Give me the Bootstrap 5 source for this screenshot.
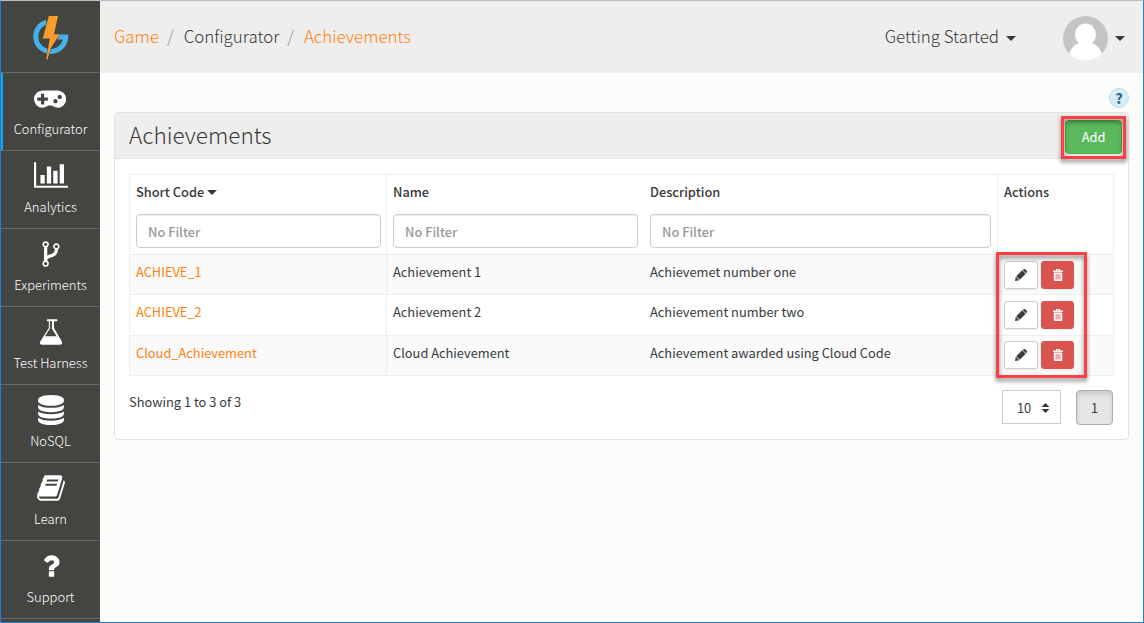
<!DOCTYPE html>
<html lang="en">
<head>
<meta charset="utf-8">
<title>Achievements</title>
<link href="https://cdn.jsdelivr.net/npm/bootstrap@5.3.0/dist/css/bootstrap.min.css" rel="stylesheet">
<script src="https://cdn.jsdelivr.net/npm/bootstrap@5.3.0/dist/js/bootstrap.bundle.min.js"></script>
<style>
  body { font: 400 12.83px/20px "Noto Sans CJK SC", sans-serif; color: #373a3c; background: #fcfcfa; }
  a { color: #ff7f0e; text-decoration: none; }
  .window { height: 623px; border: 1px solid #1883d7; border-top-color: #bfbdbd; }
  .sidebar { width: 99px; background: #444441; }
  .brand { height: 72px; border-bottom: 1px solid #686866; padding-top: 13px; }
  .side-item { height: 78px; padding-top: 10px; border-bottom: 1px solid #686866; color: #fff; font-weight: 300; font-size: 13px; }
  .side-item svg { height: 30px; width: auto; fill: #fff; display: block; margin-left: 1px; }
  .side-item svg.wide { margin: 0 1px 0 0; }
  .side-item span { line-height: 20px; margin-top: 6px; }
  .side-item.current { box-shadow: inset 2px 0 #1ba5e8; }
  .topbar { height: 72px; background: #f0eeed; font-size: 16.9px; font-weight: 300; padding: 0 18px 2px 14px; }
  .crumbs .breadcrumb-item + .breadcrumb-item { padding-left: 8px; }
  .crumbs .breadcrumb-item + .breadcrumb-item::before { padding-right: 10px; color: #8f9296; }
  .started { margin-right: 47px; }
  .arrow { border: 5px solid transparent; border-top-color: #373a3c; border-bottom: 0; }
  .topbar .arrow { margin-left: 7px; }
  .grid .arrow { margin-left: 3px; }
  .help-row { padding: 15px 14px 0 0; }
  .help { width: 20px; height: 20px; border: 1px solid #b5dcef; background: #d9edf7; color: #2b6d92; font-weight: 900; font-size: 14px; }
  .panel { --bs-card-border-color: #e3e2e1; --bs-card-border-radius: 4px; height: 328px; margin: 4px 14px 0; }
  .panel-head { height: 46px; background: #f0eeed; padding: 0 6px 0 14px; border-bottom: 1px solid #e3e2e1; border-radius: 3px 3px 0 0; }
  .panel-head h1 { font-size: 22.5px; font-weight: 300; line-height: 30px; padding-bottom: 4px; }
  .add-wrap { margin-top: 2px; }
  .btn-add { width: 57px; height: 34px; padding: 0; border: 1px solid #4cae4c; background: #5cb85c; color: #fff; font-size: 12.83px; border-radius: 4px; }
  .marker { position: absolute; border: 3px solid #fb4044; filter: drop-shadow(0 3px 2px rgba(0,0,0,.5)); pointer-events: none; z-index: 2; }
  .marker-add { inset: -4px -4px -5px -4px; }
  .marker-actions { left: -8px; top: -9px; width: 91px; height: 126px; }
  .grid { table-layout: fixed; width: 984px; margin: 15px 0 0 14px; border-collapse: collapse; }
  .grid th, .grid td { border: 0 solid #eeeeee; border-width: 1px 0; padding: 0 6px; vertical-align: top; }
  .grid tr > :first-child, .grid tr > :last-child { border-left-width: 1px; }
  .grid tr > :last-child { border-right-width: 1px; }
  .grid tr > :nth-child(2) { border-left-width: 1px; }
  .grid tr > :nth-child(3) { padding-left: 6.5px; }
  .grid tr > :first-child { padding-right: 5px; }
  .grid th { height: 80px; font-weight: 500; font-size: 12.8px; padding-top: 7px; }
  .grid td { height: 40px; padding-top: 7px; }
  .grid tr.tall td { height: 41px; }
  .grid tbody tr:nth-child(odd) td { background: #fafafa; }
  .filter { height: 34px; margin-top: 12px; border: 1px solid #ccc; border-radius: 4px; padding: 0 11px; font: inherit; box-shadow: inset 0 1px 1px rgba(0,0,0,.075); }
  .filter::placeholder { color: #999; opacity: 1; }
  .grid td.acts { padding-top: 6px; }
  .grid tr:last-child td.acts { padding-top: 5px; }
  .acts-row { gap: 3px; }
  .acts .btn { height: 28px; padding: 0; border-radius: 3px; box-shadow: 0 1px 2px rgba(0,0,0,.08); }
  .acts svg { width: 12px; height: 12px; display: block; }
  .btn-edit { width: 34px; background: #fff; border: 1px solid #ccc; color: #373a3c; }
  .btn-del { width: 33px; background: #d9534f; border: 1px solid #d9534f; color: #fff; }
  .foot { padding: 14px 15px 0 14px; }
  .foot .total { margin-top: 2px; }
  .size { width: 59px; height: 34px; border: 1px solid #ccc; padding: 1px 10px 0 14px; background: #fff; }
  .pg { width: 37px; height: 35px; margin-left: 15px; border: 1px solid #adadad; background: #e6e6e6; border-radius: 4px; box-shadow: inset 0 3px 5px rgba(0,0,0,.125); padding-top: 1px; }
</style>
</head>
<body>
<div class="window d-flex overflow-hidden">
  <nav class="sidebar flex-shrink-0 d-flex flex-column">
    <div class="brand flex-shrink-0 d-flex justify-content-center">
      <svg width="40" height="48" viewBox="30.500 14 40 48">
        <path d="M46 22.100A15 15 0 1 0 65.200 36.900H57" fill="none" stroke="#45b1e8" stroke-width="5"/>
        <path d="M48.300 16h9.200l-4 18.300h5.700L50.300 48l-3.500 12-1-1.500 3.500-20h-7z" fill="#f89c2c" stroke="#444441" stroke-width="1" paint-order="stroke"/>
      </svg>
    </div>
    <a class="side-item current flex-shrink-0 d-flex flex-column align-items-center" href="#">
      <svg class="wide" viewBox="0 64 1920 1792"><path d="M832 1088V960q0-14-9-23t-23-9H608V736q0-14-9-23t-23-9H448q-14 0-23 9t-9 23v192H224q-14 0-23 9t-9 23v128q0 14 9 23t23 9h192v192q0 14 9 23t23 9h128q14 0 23-9t9-23v-192h192q14 0 23-9t9-23zm576 64q0-53-37.500-90.500T1280 1024t-90.500 37.500T1152 1152t37.500 90.500T1280 1280t90.500-37.500T1408 1152zm256-256q0-53-37.500-90.500T1536 768t-90.500 37.500T1408 896t37.500 90.500T1536 1024t90.500-37.500T1664 896zm256 128q0 212-150 362t-362 150q-192 0-338-128H850q-146 128-338 128-212 0-362-150T0 1024t150-362 362-150h896q212 0 362 150t150 362z"/></svg>
      <span>Configurator</span></a>
    <a class="side-item flex-shrink-0 d-flex flex-column align-items-center" href="#">
      <svg viewBox="0 60 2048 1792"><path d="M640 896v512H384V896h256zm384-512v1024H768V384h256zm1024 1152v128H0V128h128v1408h1920zm-640-896v768h-256V640h256zm384-384v1152h-256V256h256z"/></svg>
      <span>Analytics</span></a>
    <a class="side-item flex-shrink-0 d-flex flex-column align-items-center" href="#">
      <svg viewBox="0 0 1792 1792"><path d="M672 1472q0-40-28-68t-68-28-68 28-28 68 28 68 68 28 68-28 28-68zm0-1152q0-40-28-68t-68-28-68 28-28 68 28 68 68 28 68-28 28-68zm640 128q0-40-28-68t-68-28-68 28-28 68 28 68 68 28 68-28 28-68zm96 0q0 52-26 96.500t-70 69.500q-2 287-226 414-67 38-203 81-128 40-169.500 71t-41.500 100v26q44 25 70 69.500t26 96.500q0 80-56 136t-136 56-136-56-56-136q0-52 26-96.500t70-69.500V486q-44-25-70-69.500T384 320q0-80 56-136t136-56 136 56 56 136q0 52-26 96.500T672 486v497q54-26 154-57 55-17 87.500-29.500t70.500-31 59-39.500 40.500-51 28-69.500T1120 614q-44-25-70-69.500t-26-96.500q0-80 56-136t136-56 136 56 56 136z"/></svg>
      <span>Experiments</span></a>
    <a class="side-item flex-shrink-0 d-flex flex-column align-items-center" href="#">
      <svg viewBox="0 0 1792 1792"><path fill-rule="evenodd" d="M1527 1447q56 89 21.500 153t-140.500 64H384q-106 0-140.500-64t21.500-153l503-793V256h-64q-26 0-45-19t-19-45 19-45 45-19h512q26 0 45 19t19 45-19 45-45 19h-141v398zM832 256v435l-20 31-272 430h712L980 722l-20-31V256z"/><path d="M950 256h74v398l503 793-70 30L950 700z"/></svg>
      <span>Test Harness</span></a>
    <a class="side-item flex-shrink-0 d-flex flex-column align-items-center" href="#">
      <svg viewBox="0 0 1792 1792"><path d="M896 768q237 0 443-43t325-127v170q0 69-103 128t-280 93.500-385 34.500-385-34.500T231 896 128 768V598q119 84 325 127t443 43zm0 768q237 0 443-43t325-127v170q0 69-103 128t-280 93.500-385 34.500-385-34.500-280-93.500-103-128v-170q119 84 325 127t443 43zm0-384q237 0 443-43t325-127v170q0 69-103 128t-280 93.500-385 34.500-385-34.500-280-93.500-103-128V982q119 84 325 127t443 43zM896 0q208 0 385 34.500t280 93.500 103 128v128q0 69-103 128t-280 93.500T896 640t-385-34.500T231 512 128 384V256q0-69 103-128t280-93.500T896 0z"/></svg>
      <span>NoSQL</span></a>
    <a class="side-item flex-shrink-0 d-flex flex-column align-items-center" href="#">
      <svg viewBox="0 0 1792 1792"><path d="M1703 478q40 57 18 129l-275 906q-19 64-76.500 107.500T1247 1664H324q-77 0-148.500-53.500T76 1479q-24-67-2-127 0-4 3-27t4-37q1-8-3-21.500t-3-19.500q2-11 8-21t16.500-23.500T116 1179q23-38 45-91.500t30-91.500q3-10 .5-30t-.5-28q3-11 17-28t17-23q21-36 42-92t25-90q1-9-2.500-32t.5-28q4-13 22-30.500t22-22.500q19-26 42.500-84.500T404 411q1-8-3-25.500t-2-26.500q2-8 9-18t18-23 17-21q8-12 16.500-30.500t15-35 16-36 19.500-32 26.500-23.500 36-11.500T620 134l-1 3q38-9 51-9h761q74 0 114 56t18 130l-274 906q-36 119-71.500 153.500T1089 1408H220q-27 0-38 15-11 16-1 43 24 70 144 70h923q29 0 56-15.500t35-41.500l300-987q7-22 5-57 38 15 59 43zm-1064 2q-4 13 2 22.500t20 9.500h608q13 0 25.500-9.500T1311 480l21-64q4-13-2-22.500t-20-9.500H702q-13 0-25.500 9.500T660 416zm-83 256q-4 13 2 22.500t20 9.500h608q13 0 25.500-9.500T1228 736l21-64q4-13-2-22.500t-20-9.500H619q-13 0-25.500 9.500T577 672z"/></svg>
      <span>Learn</span></a>
    <a class="side-item flex-shrink-0 d-flex flex-column align-items-center" href="#">
      <svg viewBox="0 0 1792 1792"><path d="M1088 1256v240q0 16-12 28t-28 12H808q-16 0-28-12t-12-28v-240q0-16 12-28t28-12h240q16 0 28 12t12 28zm316-600q0 54-15.500 101t-35 76.500-55 59.500-57.500 43.500-61 35.500q-41 23-68.500 65t-27.500 67q0 17-12 32.500t-28 15.500H804q-15 0-25.500-18.500T768 1096v-45q0-83 65-156.500T976 786q59-27 84-56t25-76q0-42-46.500-74T931 548q-65 0-108 29-35 25-107 115-13 16-31 16-12 0-25-8L496 575q-13-10-15.500-25t5.500-28q160-266 464-266 80 0 161 31t146 83 106 127.500 41 158.500z"/></svg>
      <span>Support</span></a>
  </nav>

  <main class="flex-grow-1">
    <header class="topbar d-flex align-items-center">
      <ol class="breadcrumb crumbs mb-0 me-auto">
        <li class="breadcrumb-item"><a href="#">Game</a></li>
        <li class="breadcrumb-item">Configurator</li>
        <li class="breadcrumb-item"><a href="#">Achievements</a></li>
      </ol>
      <div class="started d-flex align-items-center"><span>Getting Started</span><i class="arrow mt-1"></i></div>
      <svg width="45" height="45" viewBox="0 0 45 45" class="mt-1">
        <clipPath id="face"><circle cx="22.500" cy="22.500" r="22.500"/></clipPath>
        <g clip-path="url(#face)"><path fill="#c4c4c4" d="M0 0h45v45H0z"/><g fill="#fff"><ellipse cx="22.500" cy="18.500" rx="10.500" ry="11"/><path d="M5 45c0-11 6-17 13-18.500h9c7 1.500 13 7.500 13 18.500z"/></g></g>
      </svg>
      <i class="arrow mt-1"></i>
    </header>

    <div class="help-row d-flex justify-content-end"><span class="help rounded-circle d-flex align-items-center justify-content-center">?</span></div>

    <section class="card panel">
      <div class="panel-head d-flex align-items-center justify-content-between">
        <h1 class="mb-0">Achievements</h1>
        <div class="add-wrap position-relative"><button class="btn btn-add d-block">Add</button><span class="marker marker-add"></span></div>
      </div>
      <table class="grid">
        <colgroup><col style="width:257px"><col style="width:257px"><col style="width:354px"><col style="width:116px"></colgroup>
        <thead>
          <tr>
            <th><div class="d-flex align-items-center">Short Code<i class="arrow"></i></div><input class="filter d-block w-100" placeholder="No Filter"></th>
            <th>Name<input class="filter d-block w-100" placeholder="No Filter"></th>
            <th>Description<input class="filter d-block w-100" placeholder="No Filter"></th>
            <th>Actions</th>
          </tr>
        </thead>
        <tbody id="rows"></tbody>
      </table>
      <div class="foot d-flex align-items-start">
        <div class="total me-auto">Showing 1 to 3 of 3</div>
        <div class="size d-flex align-items-center justify-content-between">10
          <svg width="9" height="10" viewBox="0 0 9 10"><path d="M4.500 0L8.500 4h-8zM4.500 10L.5 6h8z" fill="#373a3c"/></svg></div>
        <div class="pg d-flex align-items-center justify-content-center">1</div>
      </div>
    </section>
  </main>
</div>
<script>
  const rows = [
    ['ACHIEVE_1', 'Achievement 1', 'Achievemet number one'],
    ['ACHIEVE_2', 'Achievement 2', 'Achievement number two'],
    ['Cloud_Achievement', 'Cloud Achievement', 'Achievement awarded using Cloud Code']
  ];
  const pencil = '<svg viewBox="0 0 12 12" fill="currentColor"><path d="M7.800.9L8.600.3q.9-.6 1.600 0l1.500 1.500q.6.700 0 1.600L11.100 4.200zM7.200 1.300l3.500 3.500-6 6-3.500-3.500zM.8 7.800l3.400 3.400L0 12z"/></svg>';
  const trash = '<svg viewBox="0 0 12 12" fill="currentColor"><path fill-rule="evenodd" d="M4 0h4v1.500h3V3H1V1.500h3zM5 .8v.7h2V.8zM1.800 3.500h8.400V11q0 1-1 1H2.800q-1 0-1-1zM3.700 5v5.500h.8V5zm1.900 0v5.500h.8V5zm1.900 0v5.500h.8V5z"/></svg>';
  document.getElementById('rows').innerHTML = rows.map((r, i) => `<tr class="${i === 1 ? 'tall' : ''}">
    <td><a href="#">${r[0]}</a></td><td>${r[1]}</td><td>${r[2]}</td>
    <td class="acts"><div class="position-relative">${i ? '' : '<span class="marker marker-actions"></span>'}<div class="acts-row d-flex">
      <button class="btn btn-edit d-flex align-items-center justify-content-center" aria-label="Edit">${pencil}</button>
      <button class="btn btn-del d-flex align-items-center justify-content-center" aria-label="Delete">${trash}</button></div></div></td></tr>`).join('');
</script>
</body>
</html>
